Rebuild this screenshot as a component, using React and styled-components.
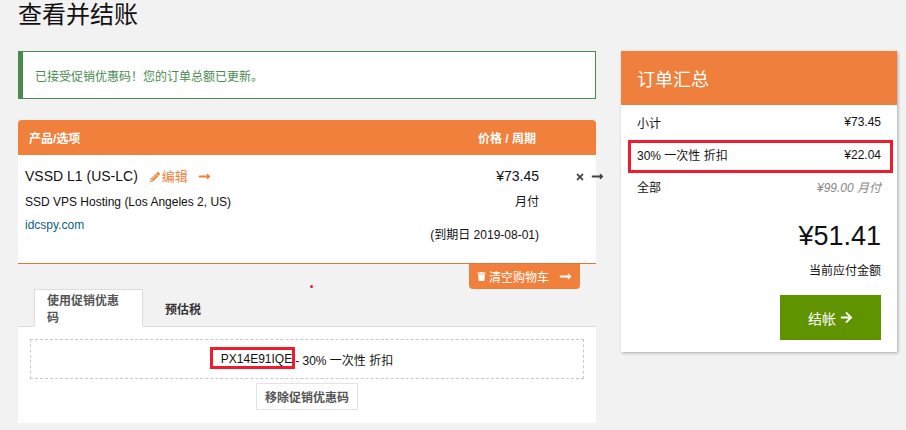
import React from "react";
import styled, { createGlobalStyle } from "styled-components";
import {
  FaPencilAlt,
  FaLongArrowAltRight,
  FaTimes,
  FaTrash,
  FaArrowRight,
} from "react-icons/fa";

const Global = createGlobalStyle`
  html, body {
    margin: 0;
    padding: 0;
    height: 430px;
    overflow: hidden;
    background: #f2f2f2;
    color: #111;
    font-family: "Liberation Sans", "Noto Sans CJK SC", sans-serif;
    font-size: 12px;
  }
  * { box-sizing: border-box; }
`;

const Page = styled.div`
  padding: 0 9px 0 18px;
  height: 430px;
  overflow: hidden;
  position: relative;
`;

const Title = styled.h1`
  margin: 0;
  height: 51px;
  font-size: 24px;
  line-height: 29px;
  font-weight: 400;
  color: #111;
`;

const Columns = styled.div`
  display: grid;
  grid-template-columns: 578px 276px;
  column-gap: 25px;
  align-items: start;
`;

const Main = styled.div`
  display: flex;
  flex-direction: column;
`;

const Alert = styled.div`
  height: 48px;
  background: #fff;
  border: 1px solid #4a8a4f;
  border-left-width: 5px;
  padding-left: 12px;
  display: flex;
  align-items: center;
  color: #4a8a4f;
  font-size: 12px;
  margin-bottom: 21px;
`;

const CartHeader = styled.div`
  height: 35px;
  background: #f0803c;
  border-radius: 4px 4px 0 0;
  color: #fff;
  font-weight: 700;
  font-size: 12px;
  display: grid;
  grid-template-columns: 1fr 118px;
  align-items: center;
  padding-left: 11px;
`;

const Item = styled.div`
  height: 109px;
  background: #fff;
  border-bottom: 1px solid #e8743b;
  display: grid;
  grid-template-columns: 1fr auto 57px;
  padding: 12px 0 0 7px;
  position: relative;
`;

const ItemInfo = styled.div`
  display: flex;
  flex-direction: column;
`;

const ItemName = styled.div`
  font-size: 14px;
  line-height: 19px;
  display: flex;
  align-items: center;
  margin-bottom: 5px;
`;

const EditLink = styled.span`
  color: #f0803c;
  font-size: 13px;
  margin-left: 12px;
  display: inline-flex;
  align-items: center;
  gap: 2px;
  svg { font-size: 10px; }
`;

const EditArrow = styled(FaLongArrowAltRight)`
  color: #f0803c;
  font-size: 13px;
  margin-left: 10px;
`;

const ItemLine = styled.div`
  line-height: 23px;
  color: ${(p) => p.$color || "#111"};
`;

const PriceCell = styled.div`
  display: flex;
  flex-direction: column;
  align-items: flex-end;
`;

const Price = styled.div`
  font-size: 14px;
  line-height: 19px;
  margin-bottom: 5px;
`;

const Cycle = styled.div`
  line-height: 23px;
  margin-bottom: 10px;
`;

const Due = styled.div`
  line-height: 23px;
`;

const RemoveCell = styled.div`
  display: flex;
  justify-content: flex-end;
  height: 19px;
  align-items: center;
  color: #444;
  gap: 6px;
  margin-right: -8px;
  font-size: 10px;
`;

const CartActions = styled.div`
  display: flex;
  justify-content: flex-end;
  padding-right: 16px;
  height: 25px;
`;

const EmptyButton = styled.div`
  width: 111px;
  height: 25px;
  background: #f0803c;
  color: #fff;
  border-radius: 0 0 4px 4px;
  font-size: 12px;
  display: flex;
  align-items: center;
  justify-content: center;
  gap: 3px;
  svg { font-size: 9px; }
`;

const ButtonArrow = styled(FaLongArrowAltRight)`
  margin-left: 7px;
  && { font-size: 13px; }
`;

const Tabs = styled.div`
  display: flex;
  height: 38px;
  padding-left: 16px;
  border-bottom: 1px solid #ddd;
`;

const Tab = styled.div`
  height: 38px;
  padding: 0 12px;
  width: ${(p) => (p.$active ? "109px" : "auto")};
  margin-left: ${(p) => (p.$active ? "0" : "10px")};
  display: flex;
  align-items: center;
  justify-content: center;
  font-weight: 700;
  font-size: 12px;
  color: ${(p) => (p.$active ? "#555" : "#333")};
  background: ${(p) => (p.$active ? "#fff" : "transparent")};
  border: ${(p) => (p.$active ? "1px solid #ddd" : "none")};
  border-bottom: ${(p) => (p.$active ? "1px solid #fff" : "none")};
`;

const TabPanel = styled.div`
  height: 96px;
  background: #fff;
  padding: 12px 12px 0;
  display: flex;
  flex-direction: column;
  align-items: center;
`;

const PromoBox = styled.div`
  width: 100%;
  height: 40px;
  border: 1px dashed #c8c8c8;
  display: flex;
  align-items: center;
  justify-content: center;
  font-size: 12px;
  padding-right: 0;
`;

const PromoCode = styled.span`
  position: relative;
  margin-right: 3px;
`;

const RedFrame = styled.span`
  position: absolute;
  left: -11px;
  top: -5px;
  width: 85px;
  height: 22px;
  border: 3px solid #ee1c2e;
  pointer-events: none;
`;

const RemovePromo = styled.div`
  margin-top: 4px;
  width: 102px;
  height: 27px;
  border: 1px solid #e3e3e3;
  color: #555;
  font-weight: 700;
  display: flex;
  align-items: center;
  justify-content: center;
  font-size: 12px;
`;

const RedDot = styled.span`
  position: absolute;
  left: 310px;
  top: 285px;
  width: 3px;
  height: 3px;
  background: #ee1c2e;
  border-radius: 50%;
`;

const Summary = styled.div`
  background: #fff;
  height: 301px;
  box-shadow: 1px 1px 3px rgba(0, 0, 0, 0.3);
  display: flex;
  flex-direction: column;
`;

const SummaryHeader = styled.div`
  height: 54px;
  background: #ef7f3c;
  color: #fff;
  font-size: 18px;
  display: flex;
  align-items: center;
  padding-left: 16px;
`;

const SummaryBody = styled.div`
  padding: 0 16px;
  display: flex;
  flex-direction: column;
`;

const Row = styled.div`
  display: flex;
  justify-content: space-between;
  align-items: center;
  height: ${(p) => p.$height || "33px"};
  position: relative;
  border-bottom: ${(p) => (p.$divider ? "1px solid #ddd" : "none")};
  font-size: 12px;
`;

const RowFrame = styled.span`
  position: absolute;
  left: -9px;
  right: -12px;
  top: 1px;
  height: 33px;
  border: 3px solid #ee1c2e;
  pointer-events: none;
`;

const Recurring = styled.span`
  color: #888;
  font-style: italic;
`;

const Total = styled.div`
  text-align: right;
  font-size: 27px;
  line-height: 32px;
  margin-top: 19px;
  color: #111;
`;

const TotalLabel = styled.div`
  text-align: right;
  font-size: 12px;
  line-height: 16px;
  margin-top: 11px;
`;

const CheckoutRow = styled.div`
  display: flex;
  justify-content: flex-end;
  margin-top: 16px;
`;

const CheckoutButton = styled.div`
  width: 101px;
  height: 45px;
  background: #5f9300;
  color: #fff;
  font-size: 14px;
  display: flex;
  align-items: center;
  justify-content: center;
  gap: 4px;
  svg { font-size: 13px; }
`;

export default function App() {
  return (
    <Page>
      <Global />
      <Title>查看并结账</Title>
      <Columns>
        <Main>
          <Alert>已接受促销优惠码！您的订单总额已更新。</Alert>
          <CartHeader>
            <span>产品/选项</span>
            <span>价格 / 周期</span>
          </CartHeader>
          <Item>
            <ItemInfo>
              <ItemName>
                VSSD L1 (US-LC)
                <EditLink>
                  <FaPencilAlt />
                  编辑
                </EditLink>
                <EditArrow />
              </ItemName>
              <ItemLine>SSD VPS Hosting (Los Angeles 2, US)</ItemLine>
              <ItemLine $color="#0b5f7a">idcspy.com</ItemLine>
            </ItemInfo>
            <PriceCell>
              <Price>¥73.45</Price>
              <Cycle>月付</Cycle>
              <Due>(到期日 2019-08-01)</Due>
            </PriceCell>
            <RemoveCell>
              <FaTimes />
              <FaLongArrowAltRight style={{ fontSize: 13 }} />
            </RemoveCell>
          </Item>
          <CartActions>
            <EmptyButton>
              <FaTrash />
              清空购物车
              <ButtonArrow />
            </EmptyButton>
          </CartActions>
          <Tabs>
            <Tab $active>使用促销优惠码</Tab>
            <Tab>预估税</Tab>
          </Tabs>
          <TabPanel>
            <PromoBox>
              <PromoCode>
                PX14E91IQE
                <RedFrame />
              </PromoCode>
              - 30% 一次性 折扣
            </PromoBox>
            <RemovePromo>移除促销优惠码</RemovePromo>
          </TabPanel>
        </Main>
        <Summary>
          <SummaryHeader>订单汇总</SummaryHeader>
          <SummaryBody>
            <Row $height="34px">
              <span>小计</span>
              <span>¥73.45</span>
            </Row>
            <Row $height="32px" $divider>
              <RowFrame />
              <span>30% 一次性 折扣</span>
              <span>¥22.04</span>
            </Row>
            <Row $height="30px">
              <span>全部</span>
              <Recurring>¥99.00 月付</Recurring>
            </Row>
            <Total>¥51.41</Total>
            <TotalLabel>当前应付金额</TotalLabel>
            <CheckoutRow>
              <CheckoutButton>
                结帐
                <FaArrowRight />
              </CheckoutButton>
            </CheckoutRow>
          </SummaryBody>
        </Summary>
      </Columns>
      <RedDot />
    </Page>
  );
}
